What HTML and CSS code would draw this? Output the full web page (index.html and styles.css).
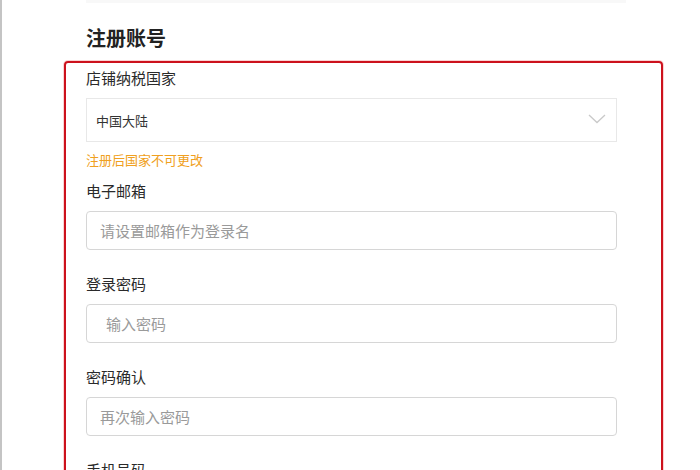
FILE: index.html
```html
<!DOCTYPE html>
<html>

<head>
    <title>注册账号</title>
    <meta name="viewport" content="width=device-width, initial-scale=1">
    <link rel="stylesheet" href="styles.css">
</head>

<body>
    <div class="page">
        <div class="top-edge"></div>
        <h2 class="title">注册账号</h2>

        <div class="form-box">
            <div class="field first">
                <label class="label">店铺纳税国家</label>
                <div class="select">
                    <span>中国大陆</span>
                    <svg class="chevron" width="18" height="10" viewBox="0 0 18 10">
                        <path d="M1 1 L9 8.5 L17 1" fill="none" stroke="#c9c9c9" stroke-width="1.3"/>
                    </svg>
                </div>
                <div class="hint">注册后国家不可更改</div>
            </div>

            <div class="field">
                <label class="label">电子邮箱</label>
                <input class="input" type="text" placeholder="请设置邮箱作为登录名">
            </div>

            <div class="field">
                <label class="label">登录密码</label>
                <input class="input input-pad" type="password" placeholder="输入密码">
            </div>

            <div class="field">
                <label class="label">密码确认</label>
                <input class="input" type="password" placeholder="再次输入密码">
            </div>

            <div class="field">
                <label class="label">手机号码</label>
                <input class="input" type="text">
            </div>
        </div>
    </div>
</body>

</html>
```

FILE: styles.css
```css
body {
    margin: 0;
    background: white;
    font-family: "Noto Sans CJK SC", "Noto Sans", sans-serif;
    color: #333;
}

.page {
    border-left: 2px solid #c4c4c4;
    padding-left: 62px;
    box-sizing: border-box;
    overflow: hidden;
    height: 470px;
}

.top-edge {
    margin-left: 22px;
    width: 540px;
    height: 3px;
    background: #f8f8f8;
}

.title {
    margin: 22px 0 0 22px;
    font-size: 20px;
    line-height: 26px;
    font-weight: bold;
    color: #222;
}

.form-box {
    margin-top: 10px;
    width: 599px;
    box-sizing: border-box;
    border: 2px solid #cc111d;
    border-radius: 4px;
    padding: 4px 44px 0 20px;
    box-shadow: 0 0 0 1px rgba(240, 130, 130, 0.35);
}

.field {
    margin-top: 23px;
}

.field.first {
    margin-top: 0;
}

.first + .field {
    margin-top: 11px;
}

.label {
    display: block;
    font-size: 15px;
    line-height: 22px;
    margin-bottom: 9px;
    color: #2a2a2a;
}

.select {
    display: flex;
    justify-content: space-between;
    align-items: center;
    height: 44px;
    box-sizing: border-box;
    border: 1px solid #e8e8e8;
    padding: 0 10px 0 9px;
    font-size: 13px;
    color: #333;
}

.chevron {
    margin-bottom: 2px;
}

.hint {
    margin-top: 9px;
    font-size: 13px;
    line-height: 18px;
    color: #f0a020;
}

.input {
    display: block;
    width: 100%;
    height: 39px;
    box-sizing: border-box;
    border: 1px solid #d6d6d6;
    border-radius: 4px;
    padding: 0 13px;
    font-family: inherit;
    font-size: 15px;
    color: #333;
    background: white;
    outline: none;
}

.input::placeholder {
    color: #9a9a9a;
}

.input-pad {
    padding-left: 19px;
}
```
